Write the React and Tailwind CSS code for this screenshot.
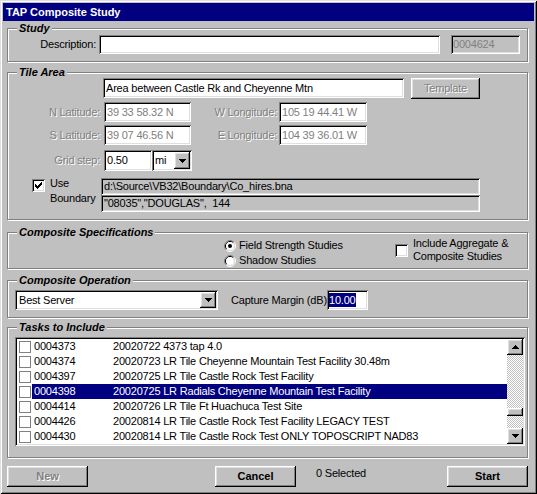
import React from "react";

const sunken = "shadow-[inset_1px_1px_0_#808080,inset_-1px_-1px_0_#fff,inset_2px_2px_0_#000,inset_-2px_-2px_0_#dfdfdf]";
const raised = "shadow-[inset_-1px_-1px_0_#000,inset_1px_1px_0_#fff,inset_-2px_-2px_0_#808080,inset_2px_2px_0_#dfdfdf]";
const etched = "border border-[#808080] shadow-[1px_1px_0_#fff,inset_1px_1px_0_#fff]";
const dis = "text-[#808080] [text-shadow:1px_1px_0_#fff]";

const CHECK = [
  [9, 3, 1], [8, 4, 2], [3, 5, 1], [7, 5, 3], [3, 6, 2], [6, 6, 3], [3, 7, 5], [4, 8, 3], [5, 9, 1],
];

function Check({ on, className = "" }) {
  return (
    <div className={`${sunken} w-[13px] h-[13px] bg-white shrink-0 ${className}`}>
      {on && (
        <svg width="13" height="13" viewBox="0 0 13 13" shapeRendering="crispEdges">
          {CHECK.map(([x, y, w], i) => (
            <rect key={i} x={x} y={y} width={w} height="1" fill="#000" />
          ))}
        </svg>
      )}
    </div>
  );
}

function Radio({ on }) {
  return (
    <svg width="12" height="12" viewBox="0 0 12 12" className="shrink-0">
      <path d="M2.11 9.89A5.5 5.5 0 0 1 9.89 2.11" fill="none" stroke="#808080" />
      <path d="M9.89 2.11A5.5 5.5 0 0 1 2.11 9.89" fill="none" stroke="#fff" />
      <path d="M2.82 9.18A4.5 4.5 0 0 1 9.18 2.82" fill="none" stroke="#000" />
      <path d="M9.18 2.82A4.5 4.5 0 0 1 2.82 9.18" fill="none" stroke="#dfdfdf" />
      <circle cx="6" cy="6" r="3.9" fill="#fff" />
      {on && <circle cx="6" cy="6" r="2" fill="#000" />}
    </svg>
  );
}

function Tri({ up }) {
  const rows = up
    ? [[3, 0, 1], [2, 1, 3], [1, 2, 5], [0, 3, 7]]
    : [[0, 0, 7], [1, 1, 5], [2, 2, 3], [3, 3, 1]];
  return (
    <svg width="7" height="4" viewBox="0 0 7 4" shapeRendering="crispEdges">
      {rows.map(([x, y, w], i) => (
        <rect key={i} x={x} y={y} width={w} height="1" fill="#000" />
      ))}
    </svg>
  );
}

function ArrowBtn({ up, className = "" }) {
  return (
    <div className={`${raised} bg-[#c0c0c0] flex items-center justify-center shrink-0 ${className}`}>
      <Tri up={up} />
    </div>
  );
}

function Frame({ title, className = "", children }) {
  return (
    <div className={`${etched} flex flex-col ml-[4px] w-[521px] shrink-0 ${className}`}>
      <div className="-mt-[7px] -mb-[6px] ml-[9px] px-[2px] h-[13px] leading-[13px] w-fit bg-[#c0c0c0] font-bold italic tracking-[0px]">
        {title}
      </div>
      {children}
    </div>
  );
}

const tasks = [
  ["0004373", "20020722 4373 tap 4.0"],
  ["0004374", "20020723 LR Tile Cheyenne Mountain Test Facility 30.48m"],
  ["0004397", "20020725 LR Tile Castle Rock Test Facility"],
  ["0004398", "20020725 LR Radials Cheyenne Mountain Test Facility", true],
  ["0004414", "20020726 LR Tile Ft Huachuca Test Site"],
  ["0004426", "20020814 LR Tile Castle Rock Test Facility LEGACY TEST"],
  ["0004430", "20020814 LR Tile Castle Rock Test ONLY TOPOSCRIPT NAD83"],
];

export default function App() {
  return (
    <div className="w-[537px] h-[494px] bg-[#c0c0c0] p-[3px] flex flex-col overflow-hidden [font-family:'Liberation_Sans',Arial,sans-serif] text-[11px] tracking-[-0.2px] text-black whitespace-nowrap shadow-[inset_1px_1px_0_#dfdfdf,inset_-1px_-1px_0_#000,inset_2px_2px_0_#fff,inset_-2px_-2px_0_#808080]">
      {/* Title bar */}
      <div className="h-[18px] bg-[#000080] text-white font-bold flex items-center pl-[3px] tracking-[0px] shrink-0">
        TAP Composite Study
      </div>

      {/* Study */}
      <Frame title="Study" className="mt-[7px] h-[34px]">
        <div className="flex items-center mt-[6px] h-[19px]">
          <div className="w-[88px] text-right">Description:</div>
          <div className={`${sunken} bg-white ml-[3px] w-[341px] h-[19px]`} />
          <div className={`${sunken} ml-[11px] w-[69px] h-[19px] flex items-center pl-[2px] text-[#808080]`}>0004624</div>
        </div>
      </Frame>

      {/* Tile Area */}
      <Frame title="Tile Area" className="mt-[10px] h-[148px]">
        <div className="flex items-start mt-[5px]">
          <div className={`${sunken} bg-white ml-[95px] w-[301px] h-[20px] flex items-center pl-[3px]`}>
            Area between Castle Rk and Cheyenne Mtn
          </div>
          <div className={`${raised} ${dis} ml-[7px] w-[69px] h-[21px] flex items-center justify-center`}>Template</div>
        </div>
        <div className="flex items-center mt-[3px] h-[20px]">
          <div className={`w-[92px] text-right ${dis}`}>N Latitude:</div>
          <div className={`${sunken} bg-white ml-[4px] w-[87px] h-[20px] flex items-center pl-[3px] text-[#808080]`}>39 33 58.32 N</div>
          <div className={`w-[86px] text-right ${dis}`}>W Longitude:</div>
          <div className={`${sunken} bg-white ml-[2px] w-[88px] h-[20px] flex items-center pl-[3px] text-[#808080]`}>105 19 44.41 W</div>
        </div>
        <div className="flex items-center mt-[3px] h-[20px]">
          <div className={`w-[92px] text-right ${dis}`}>S Latitude:</div>
          <div className={`${sunken} bg-white ml-[4px] w-[87px] h-[20px] flex items-center pl-[3px] text-[#808080]`}>39 07 46.56 N</div>
          <div className={`w-[86px] text-right ${dis}`}>E Longitude:</div>
          <div className={`${sunken} bg-white ml-[2px] w-[88px] h-[20px] flex items-center pl-[3px] text-[#808080]`}>104 39 36.01 W</div>
        </div>
        <div className="flex items-center mt-[5px] h-[21px]">
          <div className={`w-[92px] text-right ${dis}`}>Grid step:</div>
          <div className={`${sunken} bg-white ml-[4px] w-[48px] h-[21px] flex items-center pl-[3px]`}>0.50</div>
          <div className={`${sunken} bg-white w-[40px] h-[21px] flex items-center justify-between pl-[3px] pr-[2px]`}>
            <span>mi</span>
            <ArrowBtn className="w-[16px] h-[17px]" />
          </div>
        </div>
        <div className="flex items-start mt-[7px]">
          <Check on className="ml-[24px] mt-[1px]" />
          <div className="ml-[5px] w-[51px] -mt-[2px] leading-[15px]">
            Use
            <br />
            Boundary
          </div>
          <div className="flex flex-col w-[379px]">
            <div className={`${sunken} h-[17px] flex items-center pl-[3px]`}>d:\Source\VB32\Boundary\Co_hires.bna</div>
            <div className={`${sunken} h-[17px] flex items-center pl-[3px] whitespace-pre`}>{'"08035","DOUGLAS",  144'}</div>
          </div>
        </div>
      </Frame>

      {/* Composite Specifications */}
      <Frame title="Composite Specifications" className="mt-[12px] h-[37px]">
        <div className="flex items-start">
          <div className="ml-[216px] mt-[5px] w-[171px] flex flex-col">
            <div className="h-[15px] flex items-center gap-[3px]">
              <Radio on />
              <span>Field Strength Studies</span>
            </div>
            <div className="h-[15px] flex items-center gap-[3px]">
              <Radio />
              <span>Shadow Studies</span>
            </div>
          </div>
          <div className="mt-[4px] flex items-start">
            <Check className="mt-[7px]" />
            <div className="ml-[5px] leading-[13px]">
              Include Aggregate &amp;
              <br />
              Composite Studies
            </div>
          </div>
        </div>
      </Frame>

      {/* Composite Operation */}
      <Frame title="Composite Operation" className="mt-[11px] h-[38px]">
        <div className="flex items-center mt-[9px] h-[20px]">
          <div className={`${sunken} bg-white ml-[7px] w-[203px] h-[20px] flex items-center justify-between pl-[4px] pr-[2px]`}>
            <span>Best Server</span>
            <ArrowBtn className="w-[16px] h-[16px]" />
          </div>
          <div className="ml-[13px] w-[96px]">Capture Margin (dB)</div>
          <div className={`${sunken} bg-white w-[41px] h-[20px] flex items-center pl-[2px] overflow-hidden`}>
            <span className="bg-[#000080] text-white leading-[14px]">10.00</span>
          </div>
        </div>
      </Frame>

      {/* Tasks to Include */}
      <Frame title="Tasks to Include" className="mt-[9px] h-[131px]">
        <div className={`${sunken} bg-white ml-[7px] mt-[9px] w-[510px] h-[109px] p-[2px] flex`}>
          <div className="flex-1 flex flex-col overflow-hidden">
            {tasks.map(([id, d, sel]) => (
              <div key={id} className="flex items-center h-[15px] shrink-0">
                <div className="ml-[2px] w-[12px] h-[12px] border border-[#808080] bg-white shrink-0" />
                <div className={`ml-[1px] flex-1 h-[15px] flex items-center ${sel ? "bg-[#000080] text-white" : ""}`}>
                  <span className="w-[81px] pl-[2px] shrink-0">{id}</span>
                  <span>{d}</span>
                </div>
              </div>
            ))}
          </div>
          <div className="w-[16px] flex flex-col shrink-0">
            <ArrowBtn up className="w-[16px] h-[16px]" />
            <div className="flex-1 flex flex-col [background-image:repeating-conic-gradient(#fff_0_25%,#c0c0c0_0_50%)] [background-size:2px_2px]">
              <div className={`${raised} bg-[#c0c0c0] mt-[53px] h-[8px] w-[16px]`} />
            </div>
            <ArrowBtn className="w-[16px] h-[16px]" />
          </div>
        </div>
      </Frame>

      {/* Bottom buttons */}
      <div className="flex items-center mt-[8px] h-[21px] shrink-0">
        <div className={`${raised} ${dis} ml-[4px] w-[81px] h-[21px] flex items-center justify-center font-bold tracking-[0px]`}>New</div>
        <div className={`${raised} ml-[127px] w-[81px] h-[21px] flex items-center justify-center font-bold tracking-[0px]`}>Cancel</div>
        <div className="ml-[20px] -mt-[6px]">0 Selected</div>
        <div className={`${raised} ml-auto mr-[6px] w-[81px] h-[21px] flex items-center justify-center font-bold tracking-[0px]`}>Start</div>
      </div>
    </div>
  );
}
